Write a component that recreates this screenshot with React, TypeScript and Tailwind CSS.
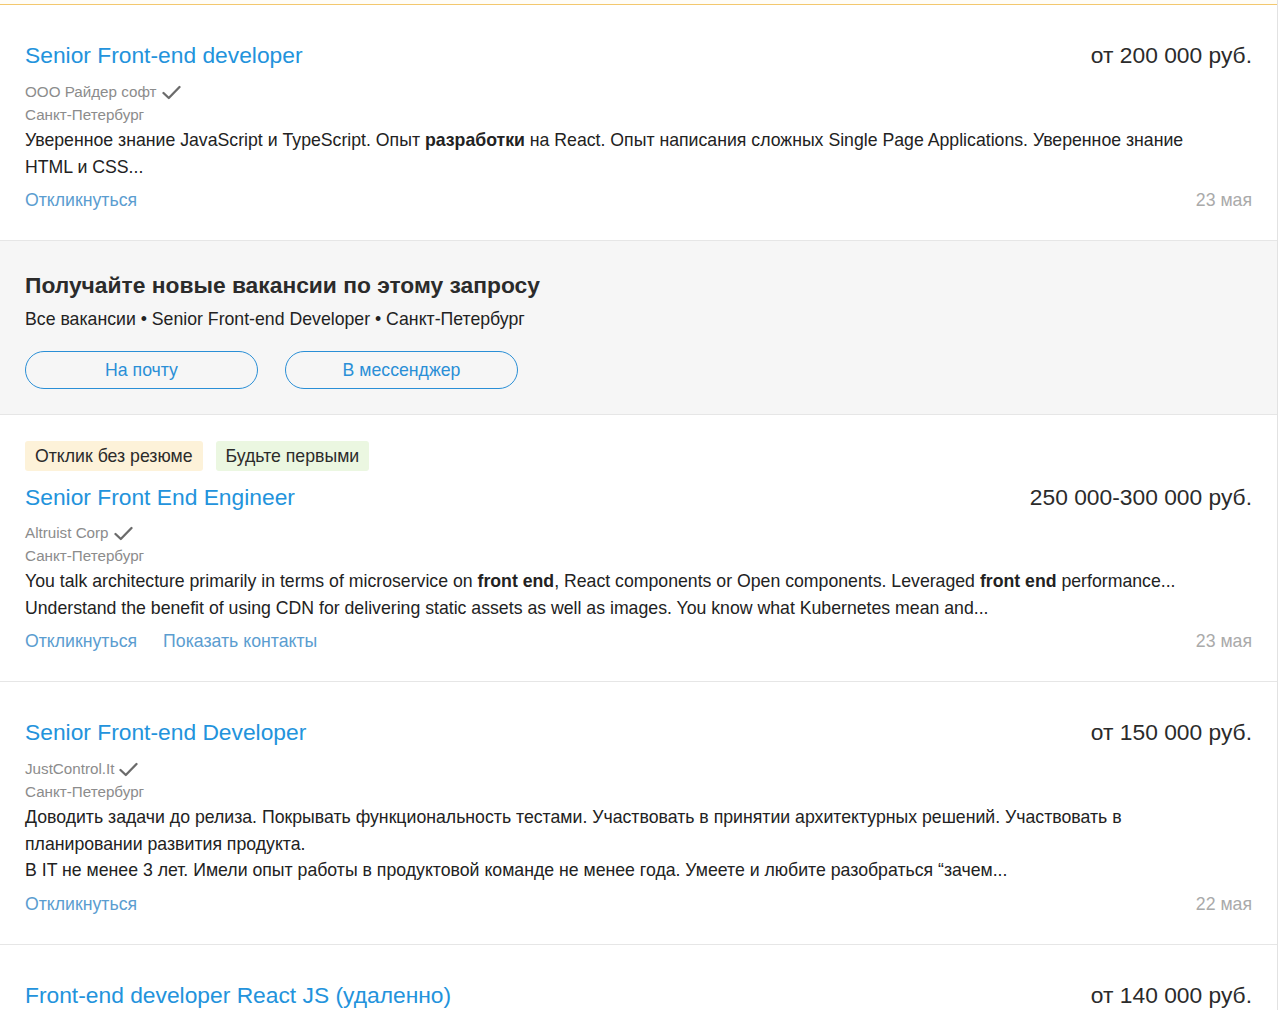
import type { ReactNode } from 'react';

type Vacancy = {
  id: number;
  title: string;
  salary: string;
  company?: string;
  city?: string;
  badges?: { label: string; tone: 'yellow' | 'green' }[];
  description?: ReactNode[];
  actions?: string[];
  date?: string;
};

const vacancies: Vacancy[] = [
  {
    id: 1,
    title: 'Senior Front-end developer',
    salary: 'от 200 000 руб.',
    company: 'ООО Райдер софт',
    city: 'Санкт-Петербург',
    description: [
      <>
        Уверенное знание JavaScript и TypeScript. Опыт <b>разработки</b> на React. Опыт написания сложных Single
        Page Applications. Уверенное знание
      </>,
      <>HTML и CSS...</>,
    ],
    actions: ['Откликнуться'],
    date: '23 мая',
  },
  {
    id: 2,
    title: 'Senior Front End Engineer',
    salary: '250 000-300 000 руб.',
    company: 'Altruist Corp',
    city: 'Санкт-Петербург',
    badges: [
      { label: 'Отклик без резюме', tone: 'yellow' },
      { label: 'Будьте первыми', tone: 'green' },
    ],
    description: [
      <>
        You talk architecture primarily in terms of microservice on <b>front end</b>, React components or Open
        components. Leveraged <b>front end</b> performance...
      </>,
      <>Understand the benefit of using CDN for delivering static assets as well as images. You know what Kubernetes mean and...</>,
    ],
    actions: ['Откликнуться', 'Показать контакты'],
    date: '23 мая',
  },
  {
    id: 3,
    title: 'Senior Front-end Developer',
    salary: 'от 150 000 руб.',
    company: 'JustControl.It',
    city: 'Санкт-Петербург',
    description: [
      <>
        Доводить задачи до релиза. Покрывать функциональность тестами. Участвовать в принятии архитектурных решений.
        Участвовать в
      </>,
      <>планировании развития продукта.</>,
      <>В IT не менее 3 лет. Имели опыт работы в продуктовой команде не менее года. Умеете и любите разобраться “зачем...</>,
    ],
    actions: ['Откликнуться'],
    date: '22 мая',
  },
  {
    id: 4,
    title: 'Front-end developer React JS (удаленно)',
    salary: 'от 140 000 руб.',
  },
];

function Check() {
  return (
    <svg width="19" height="15" viewBox="0 0 19 15" fill="none" className="ml-[5px] mt-[1px]">
      <path d="M1.5 8 L6.8 13 L17.5 2" stroke="#6b6b6b" strokeWidth="2.3" strokeLinecap="round" strokeLinejoin="round" />
    </svg>
  );
}

function VacancyCard({ v }: { v: Vacancy }) {
  return (
    <div className="border-b border-[#e6e6e6] px-[25px] pb-[28px]" style={{ paddingTop: v.badges ? 26 : 36 }}>
      {v.badges && (
        <div className="mb-[12px] flex gap-[13px]">
          {v.badges.map((b) => (
            <span
              key={b.label}
              className={
                'h-[30px] rounded-[3px] px-[10px] text-[17.7px] leading-[30px] text-[#2b2b2b] ' +
                (b.tone === 'yellow' ? 'bg-[#fdf2d9]' : 'bg-[#ebf7e1]')
              }
            >
              {b.label}
            </span>
          ))}
        </div>
      )}
      <div className="flex items-start justify-between">
        <a className="text-[22.8px] leading-[28px] text-[#2393dc]">{v.title}</a>
        <span className="text-[22.8px] leading-[28px] text-[#2b2b2b]">{v.salary}</span>
      </div>
      {v.company && (
        <div
          className="flex items-center text-[15.2px] leading-[23px] text-[#8c8c8c]"
          style={{ marginTop: v.badges ? 10 : 11 }}
        >
          {v.company}
          <Check />
        </div>
      )}
      {v.city && <div className="text-[15.2px] leading-[23px] text-[#8c8c8c]">{v.city}</div>}
      {v.description && (
        <div className="mt-[1px] text-[17.7px] leading-[26.5px] text-[#222]">
          {v.description.map((line, i) => (
            <div key={i} className="whitespace-nowrap">
              {line}
            </div>
          ))}
        </div>
      )}
      {v.actions && (
        <div className="mt-[8px] flex items-center justify-between text-[17.7px] leading-[24px]">
          <div className="flex gap-[26px] text-[#5b9dd0]">
            {v.actions.map((a) => (
              <a key={a}>{a}</a>
            ))}
          </div>
          <span className="text-[#aaaaaa]">{v.date}</span>
        </div>
      )}
    </div>
  );
}

function Subscribe() {
  return (
    <div className="border-b border-[#e6e6e6] bg-[#f6f6f6] px-[25px] pb-[25px] pt-[30px]">
      <h2 className="text-[22.8px] font-bold leading-[28px] text-[#2b2b2b]">Получайте новые вакансии по этому запросу</h2>
      <p className="mt-[8px] text-[17.7px] leading-[24px] text-[#222]">
        Все вакансии • Senior Front-end Developer • Санкт-Петербург
      </p>
      <div className="mt-[20px] flex gap-[27px]">
        <button className="h-[38px] w-[233px] rounded-full border border-[#2a8fd6] text-[17.7px] text-[#2a8fd6]">
          На почту
        </button>
        <button className="h-[38px] w-[233px] rounded-full border border-[#2a8fd6] text-[17.7px] text-[#2a8fd6]">
          В мессенджер
        </button>
      </div>
    </div>
  );
}

export default function App() {
  return (
    <div className="h-[1010px] overflow-hidden bg-white" style={{ fontFamily: '"Liberation Sans", Arial, sans-serif' }}>
      <div className="w-[1278px] border-r border-[#e2e2e2]">
        <div className="h-[5px] border-b border-[#f3c86e] bg-[#fffdf7]" />
        <VacancyCard v={vacancies[0]} />
        <Subscribe />
        {vacancies.slice(1).map((v) => (
          <VacancyCard key={v.id} v={v} />
        ))}
      </div>
    </div>
  );
}
